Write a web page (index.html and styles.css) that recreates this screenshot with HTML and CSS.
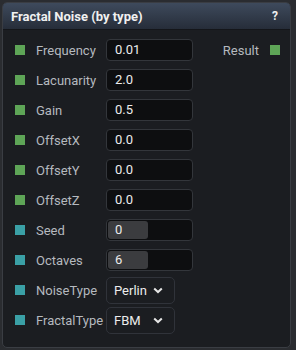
FILE: index.html
```html
<!DOCTYPE html>
<html lang="en">
<head>
    <meta charset="UTF-8">
    <title>Fractal Noise (by type)</title>
    <link rel="stylesheet" href="styles.css">
</head>
<body>

<div class="node">
    <div class="node-header">
        <span class="node-title">Fractal Noise (by type)</span>
        <span class="node-help">?</span>
    </div>
    <div class="node-body">
        <div class="row">
            <span class="pin float"></span>
            <span class="label">Frequency</span>
            <div class="field">0.01</div>
            <div class="output">
                <span class="label">Result</span>
                <span class="pin float"></span>
            </div>
        </div>
        <div class="row">
            <span class="pin float"></span>
            <span class="label">Lacunarity</span>
            <div class="field">2.0</div>
        </div>
        <div class="row">
            <span class="pin float"></span>
            <span class="label">Gain</span>
            <div class="field">0.5</div>
        </div>
        <div class="row">
            <span class="pin float"></span>
            <span class="label">OffsetX</span>
            <div class="field">0.0</div>
        </div>
        <div class="row">
            <span class="pin float"></span>
            <span class="label">OffsetY</span>
            <div class="field">0.0</div>
        </div>
        <div class="row">
            <span class="pin float"></span>
            <span class="label">OffsetZ</span>
            <div class="field">0.0</div>
        </div>
        <div class="row">
            <span class="pin int"></span>
            <span class="label">Seed</span>
            <div class="field slider"><span class="slider-fill">0</span></div>
        </div>
        <div class="row">
            <span class="pin int"></span>
            <span class="label">Octaves</span>
            <div class="field slider"><span class="slider-fill">6</span></div>
        </div>
        <div class="row">
            <span class="pin int"></span>
            <span class="label">NoiseType</span>
            <div class="select">
                <span class="select-value">Perlin</span>
                <svg class="chevron" width="10" height="7" viewBox="0 0 10 7"><path d="M1.2 1.4 L5 5 L8.8 1.4" fill="none" stroke="#e6e6e6" stroke-width="2"/></svg>
            </div>
        </div>
        <div class="row">
            <span class="pin int"></span>
            <span class="label">FractalType</span>
            <div class="select">
                <span class="select-value">FBM</span>
                <svg class="chevron" width="10" height="7" viewBox="0 0 10 7"><path d="M1.2 1.4 L5 5 L8.8 1.4" fill="none" stroke="#e6e6e6" stroke-width="2"/></svg>
            </div>
        </div>
    </div>
</div>

</body>
</html>
```

FILE: styles.css
```css
* {
    box-sizing: border-box;
    margin: 0;
    padding: 0;
}
body {
    background-color: #2a2c30;
    font-family: Roboto, "Noto Sans", sans-serif;
    font-size: 13px;
    width: 296px;
    height: 350px;
    overflow: hidden;
}
.node {
    margin: 2px 0 0 2px;
    width: 289px;
    height: 346px;
    background-color: #1b1d21;
    border: 1px solid #3a3d43;
    border-radius: 5px;
    overflow: hidden;
}
.node-header {
    height: 27px;
    display: flex;
    justify-content: space-between;
    align-items: center;
    padding: 0 12px 0 8px;
    background: linear-gradient(#3e4a5c, #262d39);
    border-bottom: 1px solid #14161a;
    color: #f0f0f0;
    font-weight: bold;
    font-size: 13px;
}
.node-help {
    font-size: 12px;
}
.node-body {
    padding: 5px 10px 0 12px;
}
.row {
    display: flex;
    align-items: center;
    height: 30px;
}
.pin {
    width: 10px;
    height: 10px;
    flex-shrink: 0;
}
.pin.float {
    background-color: #5ea557;
}
.pin.int {
    background-color: #3aa0a6;
}
.label {
    color: #b5b9bf;
    width: 70px;
    margin-left: 11px;
    white-space: nowrap;
}
.field {
    width: 87px;
    height: 22px;
    background-color: #0d0e10;
    border: 1px solid #33363b;
    border-radius: 4px;
    color: #ececec;
    padding-left: 8px;
    line-height: 20px;
}
.field.slider {
    padding: 1px;
}
.slider-fill {
    display: block;
    width: 40px;
    height: 18px;
    line-height: 18px;
    background-color: #3b3c3f;
    border-radius: 3px;
    padding-left: 7px;
}
.output {
    display: flex;
    align-items: center;
    margin-left: auto;
}
.output .label {
    width: auto;
    margin: 0 11px 0 0;
}
.select {
    width: 69px;
    height: 27px;
    display: flex;
    align-items: center;
    justify-content: space-between;
    border: 1px solid #30333a;
    border-radius: 5px;
    padding: 0 11px 0 7px;
    color: #ececec;
    font-size: 13px;
}
.chevron {
    display: block;
}
```
